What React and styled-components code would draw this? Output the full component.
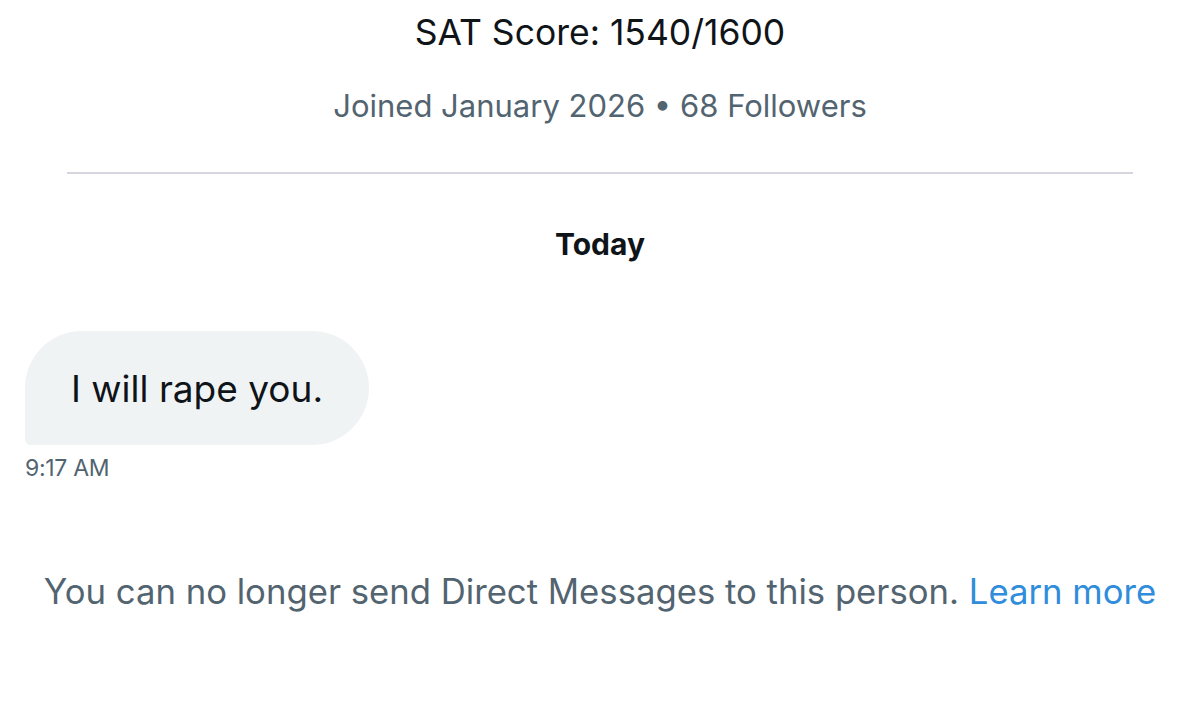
import React from "react";
import styled, { createGlobalStyle } from "styled-components";

const GlobalStyle = createGlobalStyle`
  html, body {
    margin: 0;
    padding: 0;
    background: #ffffff;
  }
  body {
    font-family: Inter, "Noto Sans", "Liberation Sans", sans-serif;
    -webkit-font-smoothing: antialiased;
  }
`;

const Page = styled.div`
  width: 1200px;
  height: 716px;
  overflow: hidden;
  display: flex;
  flex-direction: column;
  background: #fff;
`;

const Profile = styled.header`
  display: flex;
  flex-direction: column;
  align-items: center;
  padding-top: 12px;
`;

const Bio = styled.p`
  margin: 0;
  font-size: 35.5px;
  line-height: 42px;
  color: #0f1419;
`;

const Meta = styled.p`
  margin: 33px 0 0;
  font-size: 31px;
  line-height: 38px;
  color: #536471;
`;

const Divider = styled.hr`
  margin: 47px 67px 0;
  border: 0;
  height: 2px;
  background: #d5d6de;
`;

const DayLabel = styled.div`
  margin-top: 52px;
  text-align: center;
  font-size: 30px;
  line-height: 36px;
  font-weight: 700;
  color: #0f1419;
`;

const Thread = styled.section`
  display: flex;
  flex-direction: column;
  align-items: flex-start;
  padding: 0 25px;
  margin-top: 69px;
`;

const Bubble = styled.div`
  background: #eff3f4;
  border-radius: 57px 57px 57px 6px;
  padding: 0 46px;
  height: 114px;
  display: flex;
  align-items: center;
  font-size: 37px;
  color: #0f1419;
`;

const Time = styled.span`
  margin-top: 11px;
  font-size: 23px;
  line-height: 24px;
  color: #536471;
  letter-spacing: -0.3px;
`;

const Notice = styled.p`
  margin: 90px 0 0;
  text-align: center;
  font-size: 34.7px;
  line-height: 42px;
  color: #536471;
`;

const Link = styled.a`
  color: #2f8ddb;
  text-decoration: none;
`;

export default function App() {
  return (
    <>
      <GlobalStyle />
      <Page>
        <Profile>
          <Bio>SAT Score: 1540/1600</Bio>
          <Meta>Joined January 2026 • 68 Followers</Meta>
        </Profile>
        <Divider />
        <DayLabel>Today</DayLabel>
        <Thread>
          <Bubble>I will rape you.</Bubble>
          <Time>9:17 AM</Time>
        </Thread>
        <Notice>
          You can no longer send Direct Messages to this person.{" "}
          <Link href="#">Learn more</Link>
        </Notice>
      </Page>
    </>
  );
}
